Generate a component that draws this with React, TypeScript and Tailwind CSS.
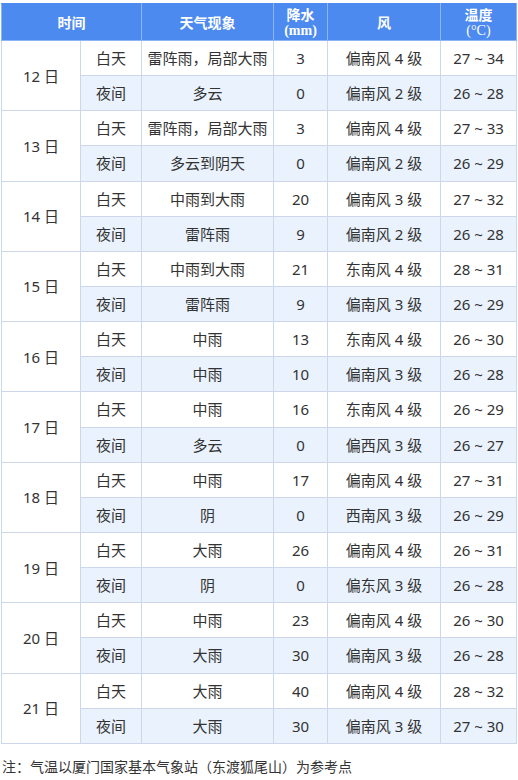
import React from 'react';

interface Period {
  weather: string;
  rain: string;
  wind: string;
  temp: string;
}

interface DayRow {
  date: string;
  day: Period;
  night: Period;
}

const rows: DayRow[] = [
  { date: '12 日', day: { weather: '雷阵雨，局部大雨', rain: '3', wind: '偏南风 4 级', temp: '27 ~ 34' }, night: { weather: '多云', rain: '0', wind: '偏南风 2 级', temp: '26 ~ 28' } },
  { date: '13 日', day: { weather: '雷阵雨，局部大雨', rain: '3', wind: '偏南风 4 级', temp: '27 ~ 33' }, night: { weather: '多云到阴天', rain: '0', wind: '偏南风 2 级', temp: '26 ~ 29' } },
  { date: '14 日', day: { weather: '中雨到大雨', rain: '20', wind: '偏南风 3 级', temp: '27 ~ 32' }, night: { weather: '雷阵雨', rain: '9', wind: '偏南风 2 级', temp: '26 ~ 28' } },
  { date: '15 日', day: { weather: '中雨到大雨', rain: '21', wind: '东南风 4 级', temp: '28 ~ 31' }, night: { weather: '雷阵雨', rain: '9', wind: '偏南风 3 级', temp: '26 ~ 29' } },
  { date: '16 日', day: { weather: '中雨', rain: '13', wind: '东南风 4 级', temp: '26 ~ 30' }, night: { weather: '中雨', rain: '10', wind: '偏南风 3 级', temp: '26 ~ 28' } },
  { date: '17 日', day: { weather: '中雨', rain: '16', wind: '东南风 4 级', temp: '26 ~ 29' }, night: { weather: '多云', rain: '0', wind: '偏西风 3 级', temp: '26 ~ 27' } },
  { date: '18 日', day: { weather: '中雨', rain: '17', wind: '偏南风 4 级', temp: '27 ~ 31' }, night: { weather: '阴', rain: '0', wind: '西南风 3 级', temp: '26 ~ 29' } },
  { date: '19 日', day: { weather: '大雨', rain: '26', wind: '偏南风 4 级', temp: '26 ~ 31' }, night: { weather: '阴', rain: '0', wind: '偏东风 3 级', temp: '26 ~ 28' } },
  { date: '20 日', day: { weather: '中雨', rain: '23', wind: '偏南风 4 级', temp: '26 ~ 30' }, night: { weather: '大雨', rain: '30', wind: '偏南风 3 级', temp: '26 ~ 28' } },
  { date: '21 日', day: { weather: '大雨', rain: '40', wind: '偏南风 4 级', temp: '28 ~ 32' }, night: { weather: '大雨', rain: '30', wind: '偏南风 3 级', temp: '27 ~ 30' } },
];

const cell = 'border border-[#cdd7ea] text-center align-middle h-[35.15px] p-0 text-[15px] leading-[20px]';
const head = 'border border-[#8fb4f5] border-t-[#4d8af0] text-center align-middle p-0 text-white font-bold text-[14px] leading-[17px]';
const serif = { fontFamily: '"Liberation Serif", serif' };

const PeriodCells: React.FC<{ p: Period }> = ({ p }) => (
  <>
    <td className={cell}>{p.weather}</td>
    <td className={cell}>{p.rain}</td>
    <td className={cell}>{p.wind}</td>
    <td className={cell}>{p.temp}</td>
  </>
);

export default function App() {
  return (
    <div className="bg-white w-[518px] h-[780px] pt-[3px] pl-px text-[#333] text-[14px]" style={{ fontFamily: '"Noto Sans", "Noto Sans CJK SC", sans-serif' }}>
      <table className="border-collapse table-fixed w-[515px]">
        <colgroup>
          <col className="w-[79px]" />
          <col className="w-[61px]" />
          <col className="w-[132px]" />
          <col className="w-[54px]" />
          <col className="w-[113px]" />
          <col className="w-[76px]" />
        </colgroup>
        <thead>
          <tr className="bg-[#4d8af0] h-[37px]">
            <th colSpan={2} className={head}>时间</th>
            <th className={head}>天气现象</th>
            <th className={head}>
              <div>降水</div>
              <div className="text-[14px] leading-[16px]" style={serif}>(mm)</div>
            </th>
            <th className={head}>风</th>
            <th className={head}>
              <div>温度</div>
              <div className="text-[14px] leading-[16px] font-normal" style={serif}>(°C)</div>
            </th>
          </tr>
        </thead>
        <tbody>
          {rows.map(r => (
            <React.Fragment key={r.date}>
              <tr className="bg-white">
                <td rowSpan={2} className={cell + ' bg-white'}>{r.date}</td>
                <td className={cell}>白天</td>
                <PeriodCells p={r.day} />
              </tr>
              <tr className="bg-[#e9f2fd]">
                <td className={cell}>夜间</td>
                <PeriodCells p={r.night} />
              </tr>
            </React.Fragment>
          ))}
        </tbody>
      </table>
      <p className="mt-[13px] pl-px text-[14px] text-[#333] leading-[20px]">注：气温以厦门国家基本气象站（东渡狐尾山）为参考点</p>
    </div>
  );
}
